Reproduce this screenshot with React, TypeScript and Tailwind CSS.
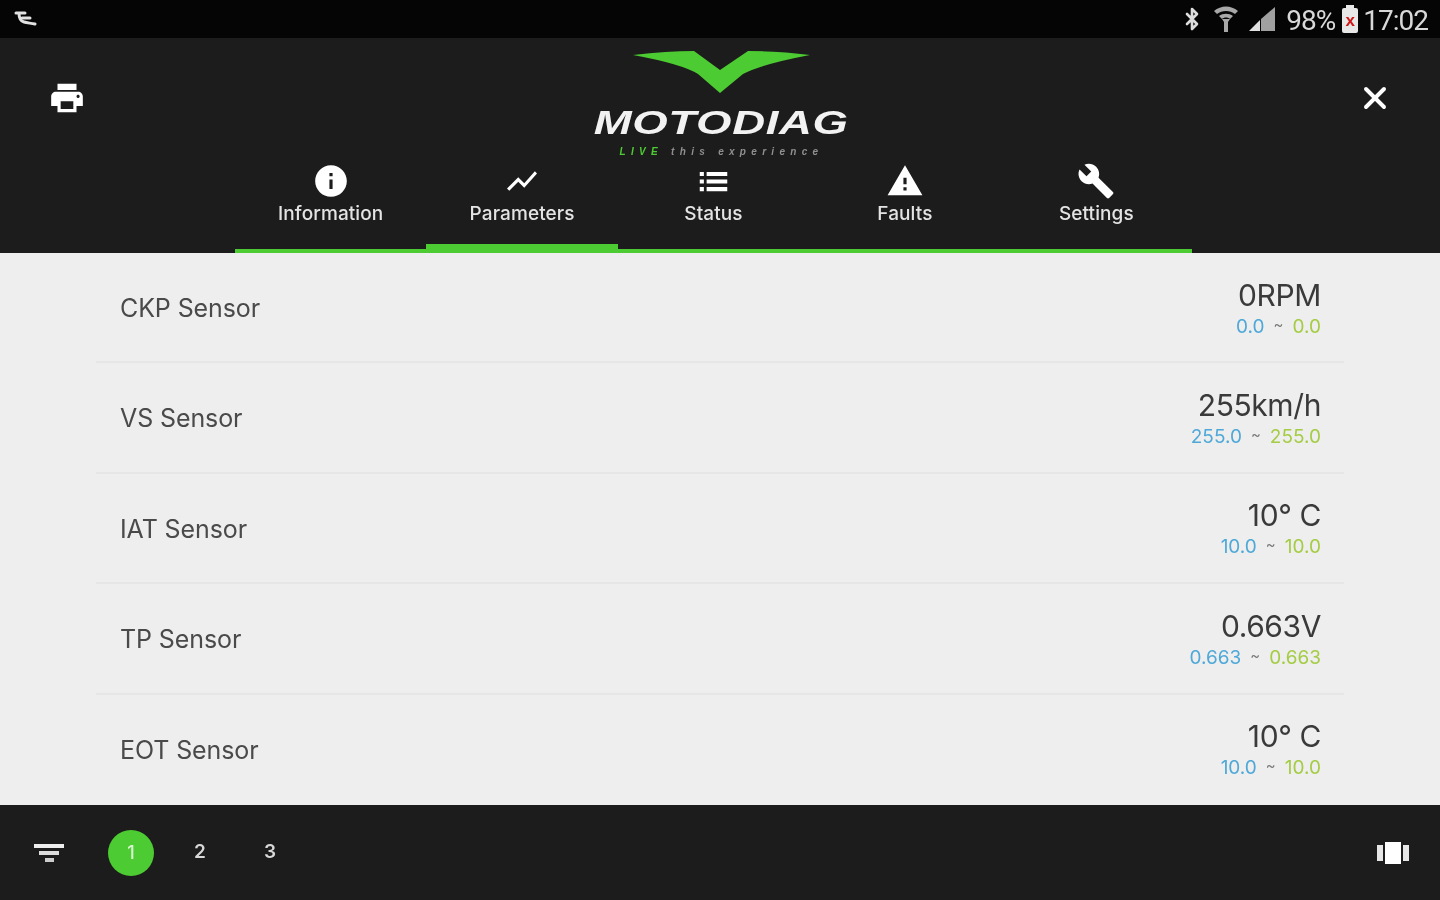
import { Bluetooth, X } from "lucide-react"

const tabs = [
  {
    label: "Information",
    icon: "M12 2C6.48 2 2 6.48 2 12s4.48 10 10 10 10-4.48 10-10S17.52 2 12 2zm1 15h-2v-6h2v6zm0-8h-2V7h2v2z",
    size: 38,
  },
  {
    label: "Parameters",
    icon: "M3.5 18.49l6-6.01 4 4L22 6.92l-1.41-1.41-7.09 7.97-4-4L2 16.99z",
    size: 36,
  },
  {
    label: "Status",
    icon: "M2 5h3v3H2zM7 5h15v3H7zM2 10.5h3v3H2zM7 10.5h15v3H7zM2 16h3v3H2zM7 16h15v3H7z",
    size: 33,
  },
  {
    label: "Faults",
    icon: "M1 21h22L12 2 1 21zm12-3h-2v-2h2v2zm0-4h-2v-4h2v4z",
    size: 38,
  },
  {
    label: "Settings",
    icon: "M22.7 19l-9.1-9.1c.9-2.3.4-5-1.5-6.9-2-2-5-2.4-7.4-1.3L9 6 6 9 1.6 4.7C.4 7.1.9 10.1 2.9 12.1c1.9 1.9 4.6 2.4 6.9 1.5l9.1 9.1c.4.4 1 .4 1.4 0l2.3-2.3c.5-.4.5-1.1.1-1.4z",
    size: 38,
  },
]

const sensors = [
  { name: "CKP Sensor", value: "0RPM", min: "0.0", max: "0.0" },
  { name: "VS Sensor", value: "255km/h", min: "255.0", max: "255.0" },
  { name: "IAT Sensor", value: "10° C", min: "10.0", max: "10.0" },
  { name: "TP Sensor", value: "0.663V", min: "0.663", max: "0.663" },
  { name: "EOT Sensor", value: "10° C", min: "10.0", max: "10.0" },
]

function StatusBar() {
  return (
    <div className="flex h-[38px] shrink-0 items-center justify-between bg-[#050505] pl-[14px] pr-[12px] text-[#d8d8d8]">
      <svg width="24" height="20" viewBox="0 0 24 20" fill="none" stroke="#e2e2e2" strokeWidth="3" strokeLinecap="round">
        <path d="M2 4h9M5 4c0 4 1 8 5 9 3 1 6 1 11 2" />
        <path d="M8 9h8" />
      </svg>
      <div className="flex items-center">
        <Bluetooth size={24} strokeWidth={2.6} className="mr-[8px] text-[#dddddd]" />
        <svg width="28" height="28" viewBox="0 0 28 28" className="mr-[8px]" fill="#a8a8a8">
          <path d="M2 6c7-6 17-6 24 0l-3 3c-5-4-13-4-18 0zM7 11c4-3 10-3 14 0l-3 3c-2-2-6-2-8 0z" />
          <path d="M10 14h8l-2 3v10h-4V17z" />
        </svg>
        <svg width="28" height="26" viewBox="0 0 28 26" className="mr-[10px]">
          <path d="M1 25L12 14v11z" fill="#e2e2e2" />
          <path d="M13 25V13L27 1v24z" fill="#a0a0a0" />
        </svg>
        <span className="mr-[7px] mt-[4px] font-['Roboto',sans-serif] text-[28px] leading-none tracking-[-1px]">98%</span>
        <div className="relative mr-[5px] mt-[2px] h-[25px] w-[16px] rounded-[2px] bg-[#e8e8e8]">
          <div className="absolute left-[4px] top-[-3px] h-[3px] w-[8px] bg-[#e8e8e8]" />
          <span className="absolute inset-0 flex items-center justify-center font-['Liberation_Sans',sans-serif] text-[17px] font-bold leading-none text-[#d01818]">x</span>
        </div>
        <span className="mt-[4px] font-['Roboto',sans-serif] text-[28px] leading-none tracking-[-1px]">17:02</span>
      </div>
    </div>
  )
}

function Logo() {
  return (
    <div className="flex flex-col items-center">
      <svg width="180" height="44" viewBox="0 0 180 44" className="ml-[2px] mt-[12px]">
        <path d="M1 5Q35 1 62 1L88 20L116 1Q150 1 178 5Q130 14 111 24L88 43L66 24Q50 14 1 5z" fill="#4dcb32" />
      </svg>
      <span className="mt-[9px] origin-center scale-x-[1.34] font-['Liberation_Sans',sans-serif] text-[34px] font-bold italic leading-[38px] tracking-[0.5px] text-[#f2f2f2]">
        MOTODIAG
      </span>
      <span className="mt-[5px] font-['Liberation_Sans',sans-serif] text-[10px] font-bold italic leading-[12px] tracking-[5.3px] text-[#8f8f8f]">
        <span className="text-[#4dcb32]">LIVE</span> this experience
      </span>
    </div>
  )
}

function Header() {
  return (
    <div className="relative flex h-[215px] shrink-0 flex-col bg-[#1c1c1c]">
      <div className="flex h-[122px] items-start justify-between pl-[48px] pr-[47px]">
        <svg width="38" height="38" viewBox="0 0 24 24" fill="#ffffff" className="mt-[41px]">
          <path d="M19 8H5c-1.66 0-3 1.34-3 3v6h4v4h12v-4h4v-6c0-1.66-1.34-3-3-3zm-3 11H8v-5h8v5zm3-7c-.55 0-1-.45-1-1s.45-1 1-1 1 .45 1 1-.45 1-1 1zm-1-9H6v4h12V3z" />
        </svg>
        <Logo />
        <X size={36} strokeWidth={2.6} className="mt-[42px] text-white" />
      </div>
      <div className="ml-[235px] flex h-[93px] w-[957px] border-b-[4px] border-[#4dcb32]">
        {tabs.map((tab, i) => (
          <div key={tab.label} className="relative flex flex-1 flex-col items-center text-[#e4e4e4]">
            <div className="flex h-[42px] items-center">
              <svg width={tab.size} height={tab.size} viewBox="0 0 24 24" fill="#ffffff">
                <path d={tab.icon} />
              </svg>
            </div>
            <span className="font-['Inter',sans-serif] text-[19px] font-medium leading-[24px] tracking-[0.1px]">{tab.label}</span>
            {i === 1 && <div className="absolute bottom-[-3px] left-0 right-0 h-[8px] bg-[#4dcb32]" />}
          </div>
        ))}
      </div>
    </div>
  )
}

function SensorRow({ name, value, min, max }: { name: string; value: string; min: string; max: string }) {
  return (
    <div className="flex h-[110.4px] shrink-0 items-center justify-between border-b-2 border-[#e6e6e6] pl-[24px] pr-[23px] last:border-transparent">
      <span className="mt-[3px] font-['Inter',sans-serif] text-[25px] tracking-[-0.1px] text-[#4a4a4a]">{name}</span>
      <div className="mt-[3px] flex flex-col items-end">
        <span className="font-['Inter',sans-serif] text-[30px] leading-[34px] tracking-[-0.4px] text-[#3a3a3a]">{value}</span>
        <span className="mt-[3px] font-['Inter',sans-serif] text-[19px] leading-[24px]">
          <span className="text-[#4fa9d8]">{min}</span>
          <span className="relative top-[-3px] px-[9px] text-[15px] text-[#777777]">~</span>
          <span className="text-[#a5cc45]">{max}</span>
        </span>
      </div>
    </div>
  )
}

function BottomBar() {
  return (
    <div className="flex h-[95px] shrink-0 items-center justify-between bg-[#1c1c1c] pl-[34px] pr-[31px]">
      <div className="flex items-center">
        <div className="flex w-[30px] flex-col items-center gap-[3px]">
          <div className="h-[4px] w-[30px] bg-[#eeeeee]" />
          <div className="h-[4px] w-[20px] bg-[#dddddd]" />
          <div className="h-[4px] w-[9px] bg-[#cccccc]" />
        </div>
        <div className="ml-[44px] flex h-[46px] w-[46px] items-center justify-center rounded-full bg-[#4dcb32] font-['Inter',sans-serif] text-[18px] font-medium text-[#d8f5d0]">
          1
        </div>
        <span className="ml-[11px] w-[70px] text-center font-['Inter',sans-serif] text-[19px] font-semibold text-[#d8d8d8]">2</span>
        <span className="w-[70px] text-center font-['Inter',sans-serif] text-[19px] font-semibold text-[#d8d8d8]">3</span>
      </div>
      <svg width="32" height="24" viewBox="0 0 32 24" fill="#ffffff">
        <path d="M0 4h6v16H0zM26 4h6v16h-6z" fill="#e6e6e6" />
        <path d="M8 1h16v22H8z" />
      </svg>
    </div>
  )
}

export default function App() {
  return (
    <div className="flex h-screen w-full flex-col overflow-hidden bg-[#eeeeee] blur-[0.6px]">
      <StatusBar />
      <Header />
      <div className="mx-[96px] flex min-h-0 flex-1 flex-col overflow-hidden">
        {sensors.map((sensor) => (
          <SensorRow key={sensor.name} {...sensor} />
        ))}
      </div>
      <BottomBar />
    </div>
  )
}
